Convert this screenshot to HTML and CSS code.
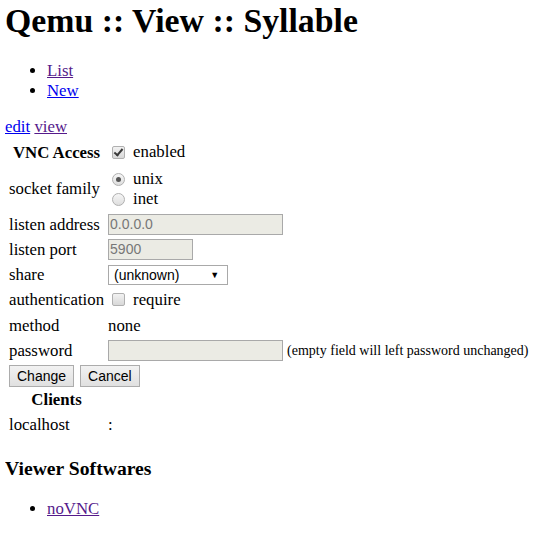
FILE: index.html
```html
<!DOCTYPE html>
<html>
<head>
<meta charset="utf-8">
<title>Qemu :: View :: Syllable</title>
<link rel="stylesheet" href="styles.css">
</head>
<body>
<h1 class="title">Qemu :: View :: Syllable</h1>
<ul class="nav">
  <li><a class="visited" href="#">List</a></li>
  <li><a href="#">New</a></li>
</ul>
<div class="tabs"><a href="#">edit</a> <a class="visited" href="#">view</a></div>
<form class="form">
<table class="grid">
  <tr>
    <th class="head">VNC Access</th>
    <td><label class="opt"><input type="checkbox" class="chk" checked disabled>enabled</label></td>
  </tr>
  <tr>
    <td class="label">socket family</td>
    <td>
      <div class="radios">
        <label class="opt"><input type="radio" class="rad" name="fam" checked disabled>unix</label>
        <label class="opt"><input type="radio" class="rad" name="fam" disabled>inet</label>
      </div>
    </td>
  </tr>
  <tr>
    <td class="label">listen address</td>
    <td><input class="field wide" type="text" value="0.0.0.0" disabled></td>
  </tr>
  <tr>
    <td class="label">listen port</td>
    <td><input class="field short" type="text" value="5900" disabled></td>
  </tr>
  <tr>
    <td class="label">share</td>
    <td><div class="select"><span>(unknown)</span><span class="arrow">&#9660;</span></div></td>
  </tr>
  <tr>
    <td class="label">authentication</td>
    <td><label class="opt"><input type="checkbox" class="chk" disabled>require</label></td>
  </tr>
  <tr>
    <td class="label">method</td>
    <td>none</td>
  </tr>
  <tr>
    <td class="label">password</td>
    <td class="pwcell"><input class="field wide" type="password" disabled><span class="note">(empty field will left password unchanged)</span></td>
  </tr>
  <tr>
    <td colspan="2" class="btns"><button type="button" class="btn">Change</button><button type="button" class="btn">Cancel</button></td>
  </tr>
  <tr>
    <th class="head">Clients</th>
    <td></td>
  </tr>
  <tr>
    <td class="label">localhost</td>
    <td class="colon">:</td>
  </tr>
</table>
</form>
<h3 class="sub">Viewer Softwares</h3>
<ul class="nav soft">
  <li><a class="visited" href="#">noVNC</a></li>
</ul>
</body>
</html>
```
FILE: styles.css
```css
html { background: #fff; }
body {
  margin: 0 0 0 5px;
  font-family: "Liberation Serif", "Times New Roman", serif;
  font-size: 16.8px;
  color: #000;
}
a { color: #0000ee; }
a.visited { color: #551a8b; }
.title {
  font-size: 33.8px;
  font-weight: bold;
  margin: 2px 0 22px 0;
  line-height: 37px;
}
.nav {
  margin: 0 0 16px 0;
  padding-left: 42px;
  line-height: 20px;
}
.tabs { margin-bottom: 1px; line-height: 20px; }
.form { margin: 0; }
.grid { border-collapse: separate; border-spacing: 2px; margin-left: 1px; }
.grid td, .grid th { padding: 1px; line-height: 21px; height: 21px; }
.head { font-weight: bold; text-align: center; }
.label { white-space: nowrap; padding-right: 3px; }
.opt { display: inline-flex; align-items: center; height: 21px; }
.chk, .rad {
  appearance: none;
  -webkit-appearance: none;
  box-sizing: border-box;
  width: 13px;
  height: 13px;
  margin: 1px 8px 0 4px;
  border: 1px solid #b0b0b0;
  background: linear-gradient(#f2f2f2, #d8d8d8);
  position: relative;
}
.chk { border-radius: 2px; }
.chk:checked::after {
  content: "";
  position: absolute;
  left: 3px;
  top: 0px;
  width: 3px;
  height: 7px;
  border: solid #3a3a3a;
  border-width: 0 2px 2px 0;
  transform: rotate(40deg);
}
.rad { border-radius: 50%; background: linear-gradient(#f6f6f6, #dedede); }
.rad:checked::after {
  content: "";
  position: absolute;
  left: 3px;
  top: 3px;
  width: 5px;
  height: 5px;
  border-radius: 50%;
  background: #555;
}
.radios { display: flex; flex-direction: column; padding: 1px 0; }
.radios .opt { height: 20px; }
.field {
  font-family: "Liberation Sans", Arial, sans-serif;
  font-size: 14px;
  height: 21px;
  box-sizing: border-box;
  border: 1px solid #a9a9a9;
  background: #ebebe4;
  color: #777;
  padding: 1px 1px;
  margin: 0;
  vertical-align: top;
}
.wide { width: 175px; }
.short { width: 85px; }
.select {
  display: inline-flex;
  justify-content: space-between;
  align-items: center;
  box-sizing: border-box;
  width: 120px;
  height: 20px;
  margin-top: 1px;
  border: 1px solid #a9a9a9;
  background: #fff;
  font-family: "Liberation Sans", Arial, sans-serif;
  font-size: 14px;
  line-height: 18px;
  padding: 0 8px 0 5px;
  vertical-align: top;
}
.arrow { font-size: 9px; }
.note { font-size: 14px; margin-left: 4px; vertical-align: top; }
.grid .btns { height: 20px; line-height: 20px; vertical-align: top; }
.btn {
  font-family: "Liberation Sans", Arial, sans-serif;
  font-size: 14px;
  height: 22px;
  line-height: 18px;
  padding: 0 7px;
  border: 1px solid #acacac;
  border-radius: 0;
  background: linear-gradient(#f2f2f2, #e0e0e0);
  color: #000;
  margin: 0 6px -2px 0;
  vertical-align: top;
}
.colon { padding-left: 0; }
.sub { font-size: 19.66px; margin: 19px 0 19px 0; }
.soft { padding-left: 42px; }
```
